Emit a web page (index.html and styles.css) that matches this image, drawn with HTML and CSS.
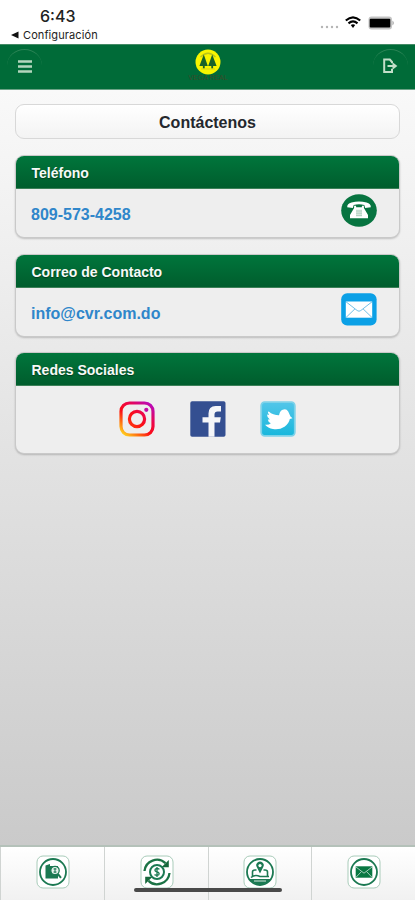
FILE: index.html
```html
<!DOCTYPE html>
<html lang="es">
<head>
    <meta charset="UTF-8">
    <meta name="viewport" content="width=device-width, initial-scale=1.0">
    <title>Contáctenos</title>
    <link rel="stylesheet" href="styles.css">
</head>
<body>

    <div class="status-bar">
        <div class="status-left">
            <div class="time">6:43</div>
            <div class="back">
                <svg width="8" height="8" viewBox="0 0 8 8"><path d="M0 4L7.5 0.5V7.5Z" fill="#111"/></svg>
                <span>Configuración</span>
            </div>
        </div>
        <div class="status-right">
            <svg class="dots" width="20" height="4" viewBox="0 0 20 4" fill="#b5b5b5">
                <circle cx="2" cy="2" r="1.2"/><circle cx="7" cy="2" r="1.2"/><circle cx="12" cy="2" r="1.2"/><circle cx="17" cy="2" r="1.2"/>
            </svg>
            <svg class="wifi" width="16" height="12" viewBox="0 0 16 12" fill="none" stroke="#000" stroke-width="2.1">
                <path d="M0.8 4.6Q8 -2 15.2 4.6"/>
                <path d="M3.5 7.4Q8 3.4 12.5 7.4"/>
                <path d="M5.8 9L8 12L10.2 9Q8 7.4 5.8 9Z" fill="#000" stroke="none"/>
            </svg>
            <svg class="battery" width="27" height="14" viewBox="0 0 27 14">
                <rect x="0.5" y="0.5" width="23.5" height="13" rx="3" fill="#c4c4c4"/>
                <rect x="1.7" y="2.7" width="20.6" height="8.8" rx="1" fill="#000"/>
                <path d="M24.5 4.5Q27 7 24.5 9.5Z" fill="#999"/>
            </svg>
        </div>
    </div>

    <header class="header">
        <a class="round-btn" href="#">
            <svg width="14" height="13" viewBox="0 0 14 13" stroke="#b4d6bd" stroke-width="2.4">
                <path d="M0 1.5H14M0 6.5H14M0 11.5H14"/>
            </svg>
        </a>
        <div class="logo">
            <svg width="26" height="26" viewBox="0 0 26 26">
                <circle cx="13" cy="13" r="12.5" fill="#f8f500"/>
                <path d="M5.5 8Q13 0.5 20.5 8" fill="none" stroke="#b9c51b" stroke-width="1.2"/>
                <path d="M8.8 5.5L12.8 17H9.7V19.5H7.9V17H4.4Z" fill="#176329"/>
                <path d="M17.2 5.5L21.6 17H18.1V19.5H16.3V17H13.2Z" fill="#176329"/>
                <path d="M6 20H20" stroke="#d3d51a" stroke-width="1"/>
            </svg>
            <span>VEGA REAL</span>
        </div>
        <a class="round-btn" href="#">
            <svg width="16" height="16" viewBox="0 0 16 16" fill="none" stroke="#c3dfc9" stroke-width="2">
                <path d="M10 5.2V4L7.8 1.6H2.2V14H10V10.8"/>
                <path d="M5.5 8H11"/>
                <path d="M10.5 4.2L15.4 8L10.5 11.8Z" fill="#c3dfc9" stroke="none"/>
            </svg>
        </a>
    </header>

    <main class="content">
        <h1 class="title">Contáctenos</h1>

        <section class="card">
            <h2>Teléfono</h2>
            <div class="card-body">
                <a href="tel:8095734258">809-573-4258</a>
                <svg class="contact-icon" width="36" height="33" viewBox="0 0 36 33">
                    <ellipse cx="18" cy="16.5" rx="17.8" ry="16.3" fill="#077440"/>
                    <path d="M6.2 13.3Q6 9.5 10.5 8.5Q18 6.3 25.5 8.5Q30 9.5 29.8 13.3L24.2 13.9L23.3 10.9Q18 9.7 12.7 10.9L11.8 13.9Z" fill="#fff"/>
                    <path d="M13.1 11.8H15.1V13.2H20.9V11.8H22.9V14.1L27 21V24.3H9V21L13.1 14.1Z" fill="#fff"/>
                    <path d="M15 17H21M15 19.2H21M15 21.4H21M16 15.6V22.5M18 15.6V22.5M20 15.6V22.5" stroke="#a6c9b7" stroke-width="0.8"/>
                </svg>
            </div>
        </section>

        <section class="card">
            <h2>Correo de Contacto</h2>
            <div class="card-body">
                <a href="mailto:info@cvr.com.do">info@cvr.com.do</a>
                <svg class="contact-icon" width="36" height="33" viewBox="0 0 36 33">
                    <rect x="0.2" y="0.3" width="35.4" height="32.2" rx="6" fill="#0ba0e6"/>
                    <rect x="4.8" y="8.5" width="26.4" height="16.2" fill="#fff"/>
                    <path d="M5 8.8L16.2 17.5Q18 19 19.8 17.5L31 8.8M5 24.5L14 15.8M31 24.5L22 15.8" fill="none" stroke="#62b9e4" stroke-width="0.9"/>
                </svg>
            </div>
        </section>

        <section class="card">
            <h2>Redes Sociales</h2>
            <div class="card-body social">
                <svg width="36" height="36" viewBox="0 0 36 36" fill="none">
                    <defs>
                        <linearGradient id="ig" x1="0.1" y1="1" x2="0.9" y2="0">
                            <stop offset="0" stop-color="#ffce1f"/>
                            <stop offset="0.22" stop-color="#ff6a10"/>
                            <stop offset="0.42" stop-color="#fb0d16"/>
                            <stop offset="0.66" stop-color="#ee0647"/>
                            <stop offset="1" stop-color="#b90aba"/>
                        </linearGradient>
                        <linearGradient id="igRing" x1="0" y1="1" x2="1" y2="0">
                            <stop offset="0" stop-color="#ff3a10"/>
                            <stop offset="0.5" stop-color="#fb0d16"/>
                            <stop offset="1" stop-color="#e8065a"/>
                        </linearGradient>
                    </defs>
                    <rect x="2" y="2" width="32" height="32" rx="8.5" stroke="url(#ig)" stroke-width="3.2"/>
                    <circle cx="18" cy="18" r="7.6" stroke="url(#igRing)" stroke-width="3.2"/>
                    <circle cx="27.3" cy="8.8" r="2.1" fill="#c30ba5"/>
                </svg>
                <svg width="36" height="36" viewBox="0 0 36 36">
                    <rect x="0.3" y="0.3" width="35.2" height="35.4" rx="1.8" fill="#344f91"/>
                    <path d="M18.5 35.7V21.5H12.5V16.2H18.5V12.5Q18.5 5 25.7 5H31V10.5H27.6Q24.5 10.5 24.5 13.4V16.2H30.8L30 21.5H24.5V35.7Z" fill="#f4f5f8"/>
                </svg>
                <svg width="36" height="36" viewBox="0 0 36 36">
                    <defs>
                        <linearGradient id="tw" x1="0" y1="0" x2="0" y2="1">
                            <stop offset="0" stop-color="#53c6e9"/>
                            <stop offset="1" stop-color="#18b7dc"/>
                        </linearGradient>
                    </defs>
                    <rect x="1.2" y="1.2" width="33.6" height="33.6" rx="3.5" fill="url(#tw)" stroke="#7dd2e9" stroke-width="1.8"/>
                    <path d="M5 23.8Q9 24.2 10.8 22.2Q8 21 7.8 18.5H9.8Q7 16.5 7 13.5L9.2 14Q7 10.8 8.8 10.5Q13 14.3 19 14.3Q20 8.3 24.8 8.3Q26.8 8.3 28.2 10.5L30.5 15.5L32.5 17.2L29.8 18Q29 22.5 24.5 25.7Q19.5 29 13 28Q8 27.3 5 23.8Z" fill="#fff"/>
                </svg>
            </div>
        </section>
    </main>

    <nav class="tab-bar">
        <a class="tab" href="#">
            <svg width="34" height="34" viewBox="0 0 34 34">
                <rect class="tile" x="1" y="1" width="32" height="32" rx="6"/>
                <circle class="ring" cx="17" cy="17" r="13"/>
                <path d="M9.5 10.5L14 9V11H22V23.5H9.5Z" fill="#1b7952"/>
                <circle cx="19" cy="15.5" r="4.2" fill="#e9f3ee" stroke="#1b7952" stroke-width="1.3"/>
                <path d="M19 13V18M17.5 14H20.5M17.5 17H20.5" stroke="#1b7952"/>
                <path d="M21.8 18.8L25 22.8" stroke="#1b7952" stroke-width="2"/>
            </svg>
        </a>
        <a class="tab" href="#">
            <svg width="34" height="34" viewBox="0 0 34 34">
                <rect class="tile" x="1" y="1" width="32" height="32" rx="6"/>
                <path class="arc" d="M4.5 16A12.5 12.5 0 0 1 25.5 8.2"/>
                <path class="arc" d="M29.5 18A12.5 12.5 0 0 1 8.5 25.8"/>
                <path d="M28.8 5V12.2H21.5ZM5.2 29V21.8H12.5Z" fill="#16683b"/>
                <circle cx="17" cy="17" r="7" fill="none" stroke="#1b7952" stroke-width="2"/>
                <path d="M19.5 14.3Q17 12.8 15.2 14.2Q14.3 16.1 17 17Q20 17.8 18.8 19.7Q17 21 14.5 19.6M17 12V22" fill="none" stroke="#1b7952" stroke-width="1.3"/>
            </svg>
        </a>
        <a class="tab" href="#">
            <svg width="34" height="34" viewBox="0 0 34 34">
                <rect class="tile" x="1" y="1" width="32" height="32" rx="6"/>
                <circle class="ring" cx="17" cy="17" r="13"/>
                <path d="M9.5 21V17Q9.5 15 12 15H13.5M24.5 21V17Q24.5 15 22 15H20.5M8 22.5Q12 19 17 21.5H26" fill="none" stroke="#1b7952" stroke-width="1.6"/>
                <path d="M17 18.5L14 12.5A3.7 3.7 0 1 1 20 12.5Z" fill="#1b7952"/>
                <circle cx="17" cy="10.6" r="1.6" fill="#fff"/>
                <path d="M6 24H28Q24 29.5 17 29.5Q10 29.5 6 24Z" fill="#1b7952"/>
                <path d="M11 26H23" stroke="#d7e9df"/>
            </svg>
        </a>
        <a class="tab" href="#">
            <svg width="34" height="34" viewBox="0 0 34 34">
                <rect class="tile" x="1" y="1" width="32" height="32" rx="6"/>
                <circle class="ring" cx="17" cy="17" r="13"/>
                <rect x="8.7" y="11.3" width="16.6" height="11.4" fill="#087742"/>
                <path d="M9 12L17 18.2L25 12M9 22.3L14.5 16.5M25 22.3L19.5 16.5" fill="none" stroke="#a3cbb8" stroke-width="1"/>
            </svg>
        </a>
        <div class="home-indicator"></div>
    </nav>

</body>
</html>
```
FILE: styles.css
```css
* {
    box-sizing: border-box;
}
body {
    margin: 0;
    height: 100vh;
    display: flex;
    flex-direction: column;
    overflow: hidden;
    font-family: "Liberation Sans", Arial, sans-serif;
    background: #fff;
}
a {
    text-decoration: none;
}
svg {
    display: block;
    flex-shrink: 0;
}

/* Status bar */
.status-bar {
    height: 44px;
    display: flex;
    justify-content: space-between;
    font-family: Inter, sans-serif;
    color: #222;
}
.status-left {
    padding: 6px 0 0 11px;
}
.time {
    padding-left: 29px;
    font-size: 16px;
    line-height: 20px;
    font-weight: 500;
}
.back {
    display: flex;
    align-items: center;
    gap: 4px;
    margin-top: 2px;
    font-size: 11px;
    line-height: 14px;
    letter-spacing: 0.1px;
}
.status-right {
    display: flex;
    align-items: flex-start;
    padding: 16px 20px 0 0;
}
.dots {
    margin: 9px 5px 0 0;
}
.wifi {
    margin-right: 7px;
}

/* Header */
.header {
    height: 46px;
    display: flex;
    justify-content: space-between;
    padding: 4px 7px 0;
    background: #006b38;
    border-top: 1px solid #448b66;
    border-bottom: 1px solid #6ba386;
}
.round-btn {
    width: 35px;
    height: 33px;
    display: flex;
    align-items: center;
    justify-content: center;
    border-radius: 50%;
    border-top: 1px solid #2b8456;
}
.logo {
    display: flex;
    flex-direction: column;
    align-items: center;
    padding-left: 1px;
}
.logo span {
    margin-top: -1px;
    font-size: 7px;
    line-height: 8px;
    color: #3b4a2a;
}

/* Content */
.content {
    flex: 1;
    display: flex;
    flex-direction: column;
    gap: 16px;
    padding: 14px 15px;
    background: linear-gradient(#f9f9f9, #cacaca);
}
.title {
    height: 35px;
    margin: 0;
    font-size: 16px;
    line-height: 35px;
    text-align: center;
    color: #24272d;
    background: linear-gradient(#fff, #f3f3f3);
    border: 1px solid #d8d8d8;
    border-radius: 9px;
}
.card {
    height: 83px;
    display: flex;
    flex-direction: column;
    background: #eee;
    border: 1px solid #c9c9c9;
    border-radius: 9px;
    box-shadow: 0 1px 2px rgba(0, 0, 0, 0.2);
    overflow: hidden;
}
.card + .card {
    margin-top: -0.5px;
}
.card:last-child {
    height: 102px;
}
.card h2 {
    height: 34px;
    margin: -1px -1px 0;
    padding-left: 16.5px;
    font-size: 14px;
    line-height: 37px;
    color: #f6faf7;
    text-shadow: 0 1px 1px #003d1d;
    background: linear-gradient(#00763c, #005d2d);
    border-bottom: 1px solid #3c8058;
}
.card-body {
    flex: 1;
    display: flex;
    justify-content: space-between;
    align-items: flex-start;
    padding: 5px 22px 0 15px;
}
.card-body a {
    padding-top: 11px;
    font-size: 16px;
    line-height: 20px;
    font-weight: bold;
    color: #2f86ca;
}
.card-body.social {
    justify-content: center;
    gap: 34.5px;
    padding: 15px 0 0;
}

/* Bottom tabs */
.tab-bar {
    position: relative;
    height: 55px;
    display: grid;
    grid-template-columns: repeat(4, 1fr);
    background: linear-gradient(#fff, #f1f1f1);
    border-top: 2px solid #b4c1b9;
}
.tab {
    display: flex;
    justify-content: center;
    padding: 8px 0 0 1px;
    border-left: 1px solid #d0d4d2;
}
.tile {
    fill: #fff;
    stroke: #a9ccba;
}
.ring {
    fill: none;
    stroke: #1b7952;
    stroke-width: 1.8;
}
.arc {
    fill: none;
    stroke: #1b7345;
    stroke-width: 2.3;
}
.home-indicator {
    position: absolute;
    left: 134px;
    bottom: 8px;
    width: 148px;
    height: 4px;
    border-radius: 2px;
    background: #494949;
}
```
